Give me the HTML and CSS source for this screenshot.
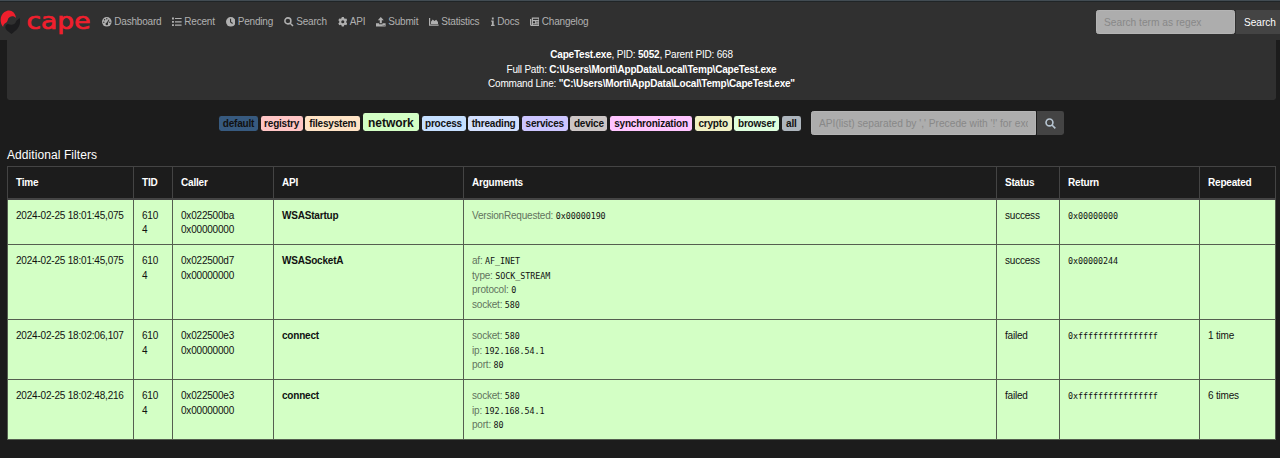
FILE: index.html
```html
<!DOCTYPE html>
<html lang="en">
<head>
<meta charset="utf-8">
<title>CAPE Sandbox</title>
<link rel="stylesheet" href="styles.css">
</head>
<body>
<nav class="navbar">
  <a class="brand">
    <svg width="92" height="30" viewBox="0 0 92 30">
      <path d="M7 23.500l4.500 3.500C16 23.500 20.500 20 20 14c0-2 0-2-.5-3-1 1.500-3 1.800-3.500 3.500-1 3.500-5 4-8 2.500-3 .5-3.500 4-1 6.500z" fill="#1c1c1e"/>
      <path d="M3.200 20C-.8 15.500 0 8 4.500 5c5-3.800 11-.5 11.500 6.200-1.500-2.200-4.500-2.400-6.500-1C7 11.800 8.500 14.500 5.500 16 4 17 3.200 18 3.200 20z" fill="#f01f2d"/>
      <text class="brand-text" x="26.500" y="22" textLength="64" lengthAdjust="spacingAndGlyphs">cape</text>
    </svg>
  </a>
  <ul class="menu">
    <li class="m1"><svg class="ic" viewBox="0 0 16 16"><circle cx="8" cy="8" r="8"/><g fill="#303030"><circle cx="8" cy="3" r="1.200"/><circle cx="4.300" cy="4.700" r="1.200"/><circle cx="3" cy="8.600" r="1.200"/><circle cx="13" cy="8.600" r="1.200"/><circle cx="8" cy="11.500" r="2.100"/><path d="M7.300 10.500L11 4l1.300.7-3 6.500z"/></g></svg>Dashboard</li>
    <li class="m2"><svg class="ic" viewBox="0 0 16 16"><path d="M0 1h3.200v3H0zM0 6.500h3.200v3H0zM0 12h3.200v3H0zM5 1.500h11v2H5zM5 7h11v2H5zM5 12.500h11v2H5z"/></svg>Recent</li>
    <li class="m3"><svg class="ic" viewBox="0 0 16 16"><circle cx="8" cy="8" r="8"/><path d="M7.600 3v5.300l3.400 2.500" fill="none" stroke="#303030" stroke-width="1.800"/></svg>Pending</li>
    <li class="m4"><svg class="ic" viewBox="0 0 16 16"><path d="M10.500 10.500L15 15M11.500 6.500a5 5 0 1 1-10 0 5 5 0 0 1 10 0z" fill="none" stroke="#b0b0b0" stroke-width="2.600"/></svg>Search</li>
    <li class="m5"><svg class="ic" viewBox="0 0 16 16"><path fill-rule="evenodd" d="M6.300 0h3.400l.5 2.200 1.500.9 2.100-.8 1.700 3-1.600 1.500v2.400l1.600 1.500-1.700 3-2.100-.8-1.500.9-.5 2.200H6.300l-.5-2.200-1.500-.9-2.100.8-1.700-3 1.600-1.500V6.800L.5 5.300l1.700-3 2.100.8 1.500-.9zM8 5.400a2.600 2.600 0 1 0 0 5.200 2.600 2.600 0 0 0 0-5.200z"/></svg>API</li>
    <li class="m6"><svg class="ic" viewBox="0 0 16 16"><path d="M8 0l5 5.300H9.700v5.200H6.300V5.300H3z"/><path fill-rule="evenodd" d="M0 10.500h5.200v1.700h5.600v-1.700H16v5.300H0zM11.300 13.400v1h1v-1zM13.300 13.400v1h1v-1z"/></svg>Submit</li>
    <li class="m7"><svg class="ic" viewBox="0 0 16 16"><path d="M0 1.500h2v11.200h14v2H0z"/><path d="M3.300 11.500V8l3-4 2.700 2.700L12 4.500l3 4v3z"/></svg>Statistics</li>
    <li class="m8"><svg class="ic ic-info" viewBox="0 0 6 16"><path d="M1.500 1h3v3h-3zM.3 6h4.200v7H6v2H0v-2h1.500V8H.3z"/></svg>Docs</li>
    <li class="m9"><svg class="ic" viewBox="0 0 16 16"><path fill-rule="evenodd" d="M3 1h13v14H1.500L0 13.500V3.500h2V13h1zM5 3v2h9V3zM5 7v3.500h3.500V7zM10 7v1h4V7zM10 9.500v1h4v-1zM5 12v1h9v-1z"/></svg>Changelog</li>
  </ul>
  <form class="search"><input class="field" type="text" placeholder="Search term as regex"><button class="btn" type="button">Search</button></form>
</nav>

<main>
  <section class="process">
    <div><b>CapeTest.exe</b>, PID: <b>5052</b>, Parent PID: 668</div>
    <div>Full Path: <b>C:\Users\Morti\AppData\Local\Temp\CapeTest.exe</b></div>
    <div>Command Line: <b>"C:\Users\Morti\AppData\Local\Temp\CapeTest.exe"</b></div>
  </section>

  <div class="filters">
    <div class="badges">
      <span class="badge default">default</span><span class="badge registry">registry</span><span class="badge filesystem">filesystem</span><span class="badge network">network</span><span class="badge proc">process</span><span class="badge threading">threading</span><span class="badge services">services</span><span class="badge device">device</span><span class="badge sync">synchronization</span><span class="badge crypto">crypto</span><span class="badge browser">browser</span><span class="badge all">all</span>
    </div>
    <div class="api-search">
      <input class="field api-field" type="text" placeholder="API(list) separated by ',' Precede with '!' for exclusion">
      <button class="btn icon-btn" type="button"><svg class="glass" viewBox="0 0 16 16"><path d="M10.500 10.500L15 15M11.500 6.500a5 5 0 1 1-10 0 5 5 0 0 1 10 0z" fill="none" stroke="#b5c3cf" stroke-width="2.400"/></svg></button>
    </div>
  </div>

  <h4 class="title">Additional Filters</h4>

  <table class="calls">
    <colgroup><col class="c-time"><col class="c-tid"><col class="c-caller"><col class="c-api"><col class="c-args"><col class="c-status"><col class="c-return"><col class="c-rep"></colgroup>
    <thead>
      <tr><th>Time</th><th>TID</th><th>Caller</th><th>API</th><th>Arguments</th><th>Status</th><th>Return</th><th>Repeated</th></tr>
    </thead>
    <tbody>
      <tr class="r1"><td>2024-02-25 18:01:45,075</td><td class="tid">6104</td><td>0x022500ba<br>0x00000000</td><td><b>WSAStartup</b></td>
        <td><div class="arg">VersionRequested: <code>0x00000190</code></div></td><td>success</td><td><code>0x00000000</code></td><td></td></tr>
      <tr class="r2"><td>2024-02-25 18:01:45,075</td><td class="tid">6104</td><td>0x022500d7<br>0x00000000</td><td><b>WSASocketA</b></td>
        <td><div class="arg">af: <code>AF_INET</code></div><div class="arg">type: <code>SOCK_STREAM</code></div><div class="arg">protocol: <code>0</code></div><div class="arg">socket: <code>580</code></div></td><td>success</td><td><code>0x00000244</code></td><td></td></tr>
      <tr class="r3"><td>2024-02-25 18:02:06,107</td><td class="tid">6104</td><td>0x022500e3<br>0x00000000</td><td><b>connect</b></td>
        <td><div class="arg">socket: <code>580</code></div><div class="arg">ip: <code>192.168.54.1</code></div><div class="arg">port: <code>80</code></div></td><td>failed</td><td><code>0xffffffffffffffff</code></td><td>1 time</td></tr>
      <tr class="r3"><td>2024-02-25 18:02:48,216</td><td class="tid">6104</td><td>0x022500e3<br>0x00000000</td><td><b>connect</b></td>
        <td><div class="arg">socket: <code>580</code></div><div class="arg">ip: <code>192.168.54.1</code></div><div class="arg">port: <code>80</code></div></td><td>failed</td><td><code>0xffffffffffffffff</code></td><td>6 times</td></tr>
    </tbody>
  </table>
</main>
</body>
</html>
```
FILE: styles.css
```css
* { box-sizing: border-box; }
body {
  margin: 0;
  height: 458px;
  overflow: hidden;
  background: #1c1c1c;
  color: #fff;
  font: 10px/14.400px "Liberation Sans", Arial, sans-serif;
  letter-spacing: -.2px;
}
.navbar {
  display: flex;
  align-items: center;
  height: 40px;
  padding-top: 3px;
  background: #303030;
  border-top: 1px solid #424c53;
  box-shadow: inset 0 1px #202527;
}
.brand { display: block; width: 102px; height: 30px; flex: none; }
.brand-text {
  font: 22.5px "DejaVu Sans", sans-serif;
  letter-spacing: 0;
  fill: #f01f2d;
  stroke: #f01f2d;
  stroke-width: .7px;
}
.menu { display: flex; margin: 0; padding: 0; list-style: none; color: #b0b0b0; }
.menu li { display: flex; align-items: center; gap: 2.700px; flex: none; white-space: nowrap; }
.m1 { width: 70px; }
.m2 { width: 53.500px; }
.m3 { width: 58.500px; }
.m4 { width: 53.500px; }
.m5 { width: 38.500px; }
.m6 { width: 53px; }
.m7 { width: 62px; }
.m8 { width: 38.500px; }
.ic { width: 9.600px; height: 9.600px; fill: #b0b0b0; flex: none; }
.ic-info { width: 3.600px; }
.search { display: flex; gap: 1px; margin-left: auto; }
.field {
  width: 139px;
  height: 24px;
  padding: 0 7px;
  border: 1px solid #b4b4b4;
  border-radius: 2.400px;
  background: #adadad;
  font: 10.200px "Liberation Sans", Arial, sans-serif;
}
.field::placeholder { color: #888; opacity: 1; }
.btn {
  width: 44px;
  height: 24px;
  padding: 0 0 0 4px;
  border: 0;
  background: #444;
  color: #fff;
  font: 10.100px "Liberation Sans", Arial, sans-serif;
  white-space: nowrap;
  overflow: hidden;
}
main { padding: 0 4px 0 7px; }
.process {
  height: 60px;
  padding-top: 8.400px;
  border-radius: 0 0 2.400px 2.400px;
  background: #303030;
  text-align: center;
}
.filters { display: flex; height: 47px; padding-left: 212px; }
.badges {
  display: flex;
  flex: none;
  align-items: flex-end;
  gap: 2.640px;
  width: 583px;
  height: 31px;
  color: #111;
}
.badge {
  flex: none;
  height: 15px;
  border-radius: 2.400px;
  font-weight: bold;
  line-height: 15px;
  text-align: center;
}
.default { width: 39px; background: #375a7f; }
.registry { width: 42px; background: #ffc5c5; }
.filesystem { width: 55px; background: #ffe3c5; }
.network { width: 56px; height: 18px; background: #d3ffc5; font-size: 12px; line-height: 20px; letter-spacing: -.05px; }
.proc { width: 44px; background: #c5dfff; }
.threading { width: 51px; background: #d3e0ff; }
.services { width: 46px; background: #ccc5ff; }
.device { width: 37px; background: #ccc5c5; }
.sync { width: 82px; background: #ffc5ff; }
.crypto { width: 37px; background: #f0f0c5; }
.browser { width: 45px; background: #dfffdf; }
.all { width: 19px; background: #adb5bd; }
.api-search { display: flex; gap: 1px; padding: 11px 0 0 9px; }
.api-field { width: 225px; padding: 0 7px; border-radius: 2.400px 0 0 2.400px; }
.icon-btn {
  display: flex;
  align-items: center;
  justify-content: center;
  width: 27px;
  padding: 0;
  border-radius: 0 2.400px 2.400px 0;
}
.glass { width: 11px; height: 11px; }
.title { height: 19px; margin: 0; font-size: 12px; font-weight: normal; line-height: 16px; letter-spacing: .08px; }
.calls { width: 1269px; border-collapse: collapse; table-layout: fixed; }
.c-time { width: 126px; }
.c-tid { width: 39px; }
.c-caller { width: 101px; }
.c-api { width: 190px; }
.c-args { width: 533px; }
.c-status { width: 63px; }
.c-return { width: 140px; }
.calls th, .calls td {
  padding: 9.300px 8px 5.700px;
  border: 1px solid #444;
  text-align: left;
  vertical-align: top;
  word-break: break-all;
}
.calls th { height: 32px; padding: 9px 8px 7px; border-bottom: 2px solid #444; vertical-align: middle; }
.calls td { border-color: #555f50; background: #d3ffc5; color: #111; }
.calls .tid { padding-right: 12px; }
.r1 { height: 46px; }
.r2 { height: 75px; }
.r3 { height: 60px; }
.arg { color: #62735d; }
code { color: #111; font: 8.400px "DejaVu Sans Mono", monospace; letter-spacing: -.05px; }
```
